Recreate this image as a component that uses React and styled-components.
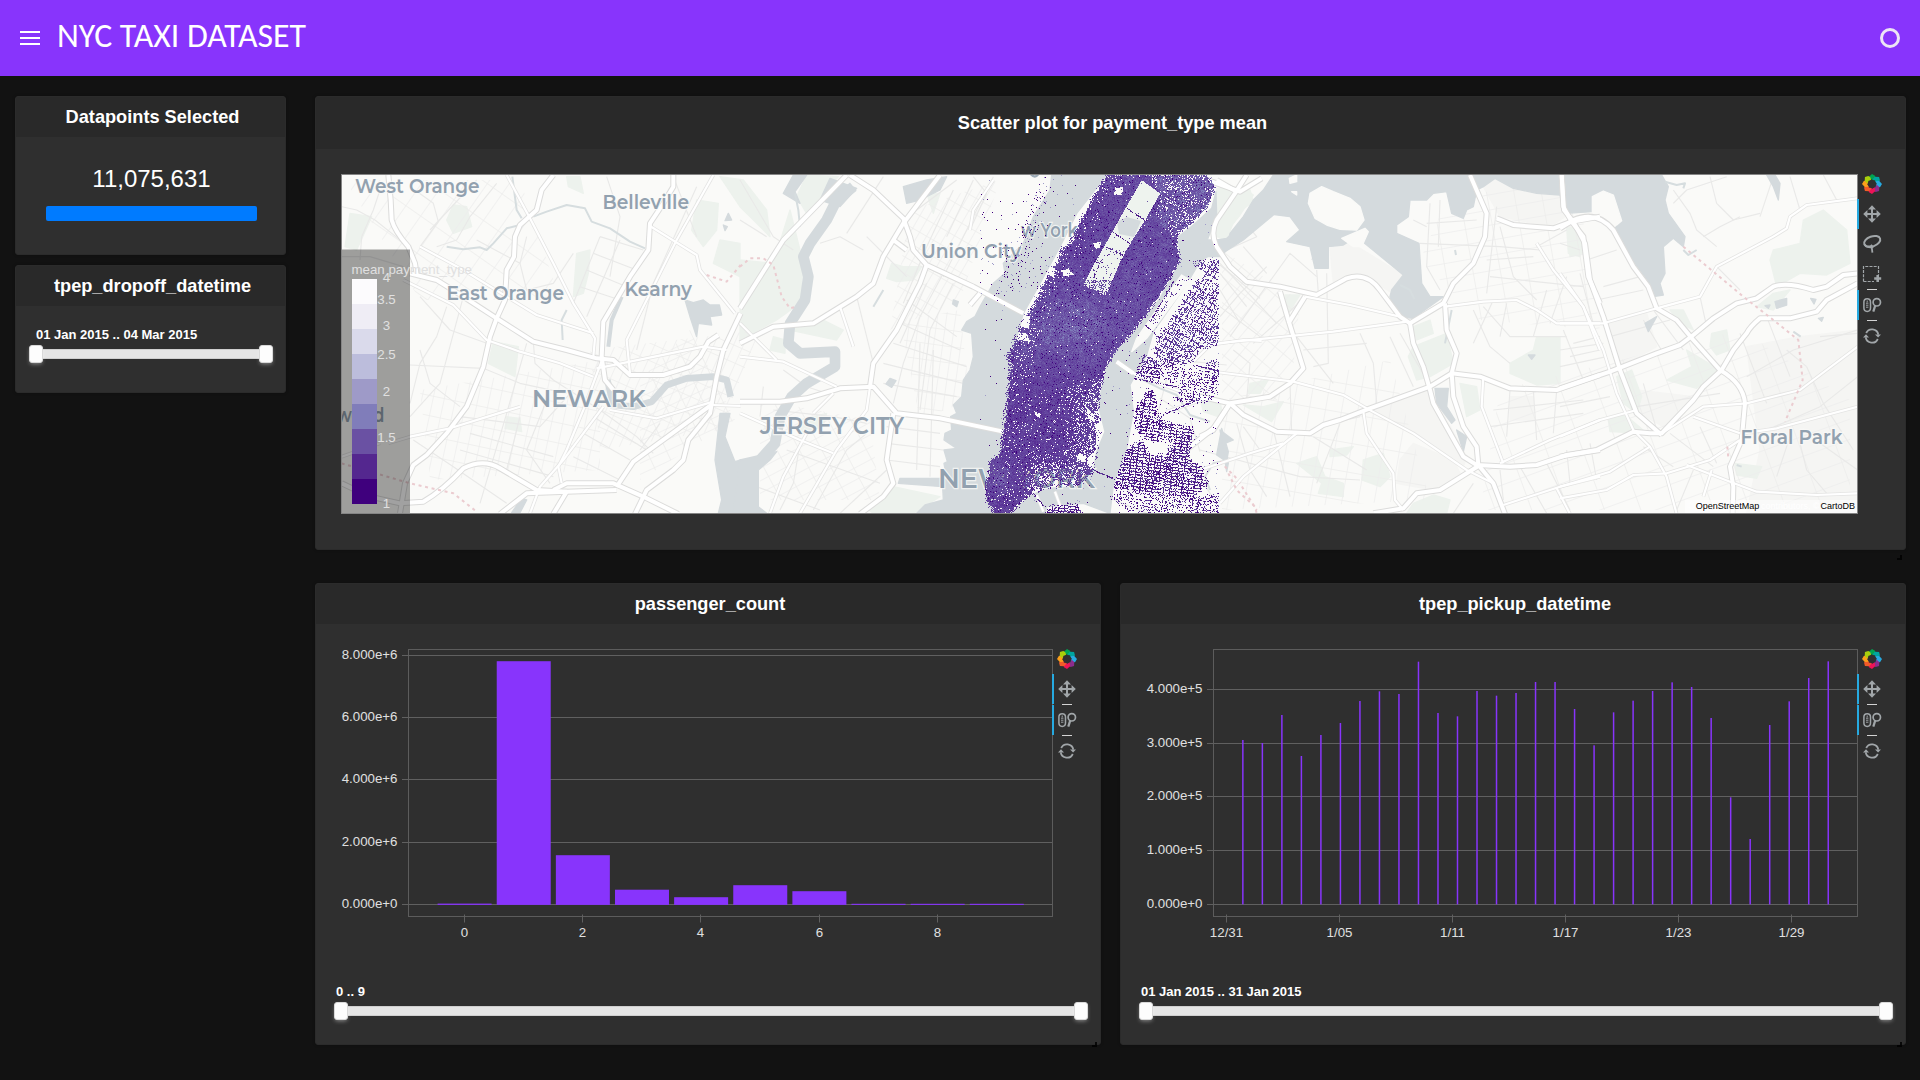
import React, { useMemo } from "react";
import styled, { createGlobalStyle } from "styled-components";

const Global = createGlobalStyle`
  html, body { margin: 0; background: #121212; }
  body { font-family: "Liberation Sans", Arial, sans-serif; color: #fff; overflow: hidden; }
  * { box-sizing: border-box; }
`;

const Page = styled.div`
  width: 1920px;
  height: 1080px;
  display: flex;
  flex-direction: column;
`;
const Header = styled.header`
  height: 76px;
  flex: none;
  background: #8834fc;
  display: flex;
  align-items: center;
  padding: 0 20px;
`;
const Menu = styled.div`
  width: 20px;
  display: grid;
  gap: 4px;
`;
const MenuLine = styled.span`
  height: 2px;
  background: #fff;
`;
const AppTitle = styled.h1`
  margin: 0 auto 4px 17px;
  font: 400 33.8px/40px Carlito, Lato, sans-serif;
  white-space: nowrap;
`;
const Busy = styled.div`
  width: 20px;
  height: 20px;
  border: 3px solid #ece4f5;
  border-radius: 50%;
`;
const Body = styled.div`
  display: flex;
  gap: 29px;
  padding: 20px 14px 0 15px;
`;
const Sidebar = styled.aside`
  width: 271px;
  display: flex;
  flex-direction: column;
  gap: 10px;
`;
const Main = styled.main`
  flex: 1;
  display: grid;
  grid-template-columns: 786px 786px;
  gap: 33px 19px;
`;
const Card = styled.section`
  position: relative;
  height: ${(p) => p.$h}px;
  grid-column: ${(p) => (p.$wide ? "1 / -1" : "auto")};
  background: #2f2f2f;
  border: 1px solid #2b2b2b;
  border-radius: 3px;
  box-shadow: 0 0 3px rgba(0, 0, 0, 0.3);
`;
const CardTitle = styled.h2`
  height: ${(p) => p.$h || 40}px;
  margin: 0;
  display: flex;
  align-items: center;
  justify-content: center;
  padding-left: 4px;
  background: #292929;
  font-size: 18.2px;
  font-weight: 700;
`;
const Count = styled.div`
  margin-top: 27px;
  padding-left: 2px;
  text-align: center;
  font-size: 24px;
  line-height: 30px;
`;
const Progress = styled.div`
  height: 15px;
  margin: 12px 28px 0 30px;
  border-radius: 2px;
  background: #007bff;
`;
const Plot = styled.div`
  display: flex;
  align-items: flex-start;
  padding: 20px 0 0 ${(p) => p.$left}px;
`;
const MapSlot = styled.div`
  padding-top: 5px;
`;
const Tools = styled.div`
  width: 30px;
  margin-left: -1px;
  position: relative;
  display: flex;
  flex-direction: column;
  align-items: center;
`;
const Tool = styled.div`
  width: 30px;
  height: 30px;
  box-shadow: ${(p) => (p.$active ? "inset 2px 0 #26aae1" : "none")};
  color: #a1a6a9;
  svg { display: block; }
`;
const ToolRule = styled.div`
  width: 10px;
  height: 1px;
  background: #d3d3d3;
`;
const SliderBox = styled.div`
  padding: ${(p) => p.$pad};
`;
const SliderLabel = styled.div`
  padding-left: ${(p) => p.$inset}px;
  font-size: 13px;
  line-height: 16px;
  font-weight: 700;
`;
const Track = styled.div`
  height: 10px;
  margin: 6px 7px 0;
  display: flex;
  justify-content: space-between;
  align-items: center;
  background: #e5e5e5;
  border: solid #cfcfcf;
  border-width: 1px 0;
`;
const Handle = styled.span`
  width: 14px;
  height: 18px;
  margin: 0 -7px;
  border: 1px solid #d9d9d9;
  border-radius: 3px;
  background: #fdfdfd;
  box-shadow: 0 2px 4px -1px rgba(255, 255, 255, 0.45), inset 0 0 1px #fff;
`;
const Grip = styled.i`
  position: absolute;
  right: 3px;
  bottom: ${(p) => p.$b}px;
  width: 5px;
  height: 5px;
  border: solid #000;
  border-width: 0 2px 2px 0;
  opacity: 0.8;
`;
const Canvas = styled.svg`
  display: block;
  flex: none;
  font-family: "Liberation Sans", Arial, sans-serif;
`;

/* ---------- toolbar ---------- */
const PETALS = ["#00a451", "#00a5a0", "#27aae1", "#8b2d8c", "#ee1358", "#f15a29", "#fb9f1b", "#a9cf0b"];
const Logo = () => (
  <svg width="30" height="30" viewBox="-15 -15 30 30">
    {PETALS.map((c, i) => (
      <path key={c} fill={c} transform={`rotate(${i * 45})`} d="M-3.1-7.2 0-10 3-8.2 3.6-6 2.4-3.6-.6-4.8-2.8-3.4Z" />
    ))}
  </svg>
);
const Pan = () => (
  <svg width="30" height="30" fill="currentColor">
    <path d="M14 10h2v4h4v2h-4v4h-2v-4h-4v-2h4z" />
    <path d="M15 6.2 19 10.4H11ZM15 23.8 19 19.6H11ZM6.2 15 10.4 11V19ZM23.8 15 19.6 11V19Z" />
  </svg>
);
const Lasso = () => (
  <svg width="30" height="30" fill="none" stroke="currentColor" strokeWidth="2">
    <ellipse cx="15.2" cy="12.4" rx="8.4" ry="5" transform="rotate(-20 15.2 12.4)" />
    <path d="M7.2 15.2 10 17.6 14.6 17.2M12 18.2 14.8 18.6 15.4 23.6M14 15.8 16.2 18.6" strokeWidth="1.8" />
  </svg>
);
const BoxSelect = () => (
  <svg width="30" height="30" fill="none" stroke="currentColor">
    <path d="M6.5 22.5V7.5H21.5V16M6.5 22.5H17" strokeDasharray="3 1.2" strokeWidth="1.2" />
    <path d="M20.7 16v7M17.2 19.5h7" strokeWidth="2.6" />
  </svg>
);
const Wheel = () => (
  <svg width="30" height="30" fill="none" stroke="currentColor" strokeWidth="1.5">
    <rect x="6.9" y="8.8" width="6.6" height="12.6" rx="3.3" />
    <path d="M10.2 10.5V12.4M9 13.2h2.4M9 15.2h2.4M9 17.2h2.4" strokeWidth="1" />
    <circle cx="19.8" cy="12.3" r="3.7" strokeWidth="1.7" />
    <path d="M18.2 15.6 16.3 21.6" strokeWidth="2.2" />
  </svg>
);
const Reset = () => (
  <svg width="30" height="30" fill="none" stroke="currentColor" strokeWidth="1.8">
    <path d="M9.2 12A6.4 6.4 0 0 1 21.3 13.6M20.8 18A6.4 6.4 0 0 1 8.7 16.4" />
    <path d="M18 13.4h6L21.1 16.6ZM6 16.4h6L9 13.2Z" fill="currentColor" stroke="none" />
  </svg>
);
const Toolbar = ({ select }) => (
  <Tools>
    <Tool><Logo /></Tool>
    <Tool $active><Pan /></Tool>
    {select && <Tool><Lasso /></Tool>}
    {select && <Tool><BoxSelect /></Tool>}
    <ToolRule />
    <Tool $active><Wheel /></Tool>
    <ToolRule />
    <Tool><Reset /></Tool>
  </Tools>
);

const RangeSlider = ({ label, pad, inset }) => (
  <SliderBox $pad={pad}>
    <SliderLabel $inset={inset}>{label}</SliderLabel>
    <Track><Handle /><Handle /></Track>
  </SliderBox>
);

/* ---------- base map, in tiles of three units per pixel ---------- */
const TILES = [
  {
    x: 320, y: 150,
    water: ["1200,790 1230,790 1215,860 1245,935 1262,930 1262,1090 1195,1090 1205,1050 1185,930", "1095,450 1120,458 1150,450 1170,465 1198,465 1205,495 1170,500 1175,525 1135,520 1130,560 1110,500", "1225,190 1235,210 1215,212", "1210,225 1222,230 1215,242", "575,1088 605,1045 620,1050 600,1088"],
    streams: ["M380 290 430 298 480 292 500 300 520 280 560 235 600 225", "M577 80 590 180 605 205", "M640 200 680 185 740 165 795 175 815 215 870 235 930 275 975 295", "M740 480 725 510 728 570"],
    rivers: [["M905 440 875 510 865 590", 12], ["M862 690 880 765 940 770 995 755 1040 705 1100 685 1180 680 1220 690 1232 740", 20]],
    parks: ["90,190 155,200 110,300 75,290", "400,165 440,170 455,230 400,250 380,210", "520,575 595,590 585,680 505,640", "770,310 810,300 805,370 790,430 760,440", "1130,150 1195,160 1190,240 1150,290 1115,240", "1200,270 1260,280 1260,380 1180,340", "560,800 600,805 605,845 555,835", "740,80 780,80 790,130 745,110"],
    minor: ["M65 320 150 320 250 350", "M120 330 125 260 160 180 180 120", "M65 170 110 180 165 210 265 290", "M285 120 340 160 355 215 300 290", "M330 240 470 90", "M350 290 410 270 450 200 530 100", "M470 270 600 340 620 260", "M300 440 390 540 500 580", "M270 645 490 655 600 700 740 730", "M270 760 300 640 350 560 380 470", "M430 440 360 700 270 800", "M600 340 620 420 700 400 760 310", "M620 580 560 790 480 1060", "M420 800 660 830 760 720", "M640 575 645 640 700 690 840 780 950 860 1000 910", "M840 260 760 460", "M900 270 800 500", "M840 260 970 300", "M820 310 950 360", "M800 360 920 410", "M780 410 900 450", "M950 600 1000 400 1130 110", "M300 600 330 700 420 770", "M280 870 400 950 560 1060", "M600 800 560 960", "M680 750 620 900 690 1000", "M450 850 700 920", "M420 900 700 980", "M820 800 980 900", "M790 850 930 930", "M760 920 900 990", "M1020 820 960 900", "M1060 80 1130 260", "M860 80 900 200 870 380"],
    medium: ["M560 75 630 205 700 340 760 460 825 565 820 620", "M1180 75 1070 270 1000 410 920 570 930 670", "M985 225 1130 315 1140 360 1245 490", "M300 290 430 360 560 440 650 495 820 550", "M1220 600 1150 590 930 635 830 655", "M250 390 330 430 400 465 500 570 600 605 720 640 820 680", "M205 880 270 860 390 835 600 770", "M870 780 1010 805 1180 755", "M850 620 790 780 740 900 715 950 725 1000", "M1180 765 1262 768", "M850 770 730 930 660 1010 630 1090", "M65 920 180 880"],
    major: ["M205 75 212 150 215 210 Q225 245 265 290L285 340 290 375", "M270 370 350 390 430 440 530 505 640 575 740 600 830 625 880 630 930 675 1030 675 1110 650 1140 620 1165 575 1195 555", "M700 75 665 120 650 180 600 225 585 260 582 320 560 360 555 450 530 505 510 560 490 650 440 770 380 850 320 915 280 945 255 1000 240 1090", "M1060 75 1060 110 1030 160 990 220 985 300 930 380 850 515 845 620 855 690 880 720", "M65 1000 150 1040 240 1060 310 1055Q370 1020 430 955 490 925 540 955L650 1020 740 1025 890 1020", "M700 1020 740 1000 880 1000 970 1040 1075 1092", "M890 1010 940 935 1180 760", "M945 1092 980 1020 1060 960 1090 930 1105 870 1170 790 1190 680 1210 600 1262 490", "M540 1092 620 1030 740 1025 700 1092"],
    dash: ["M65 940 270 1000 400 1030 470 1085", "M1160 375 1220 395 1262 345"],
  },
  {
    x: 740, y: 150,
    water: ["935,75 1100,75 1010,190 960,290 900,400 850,490 820,600 810,700 800,850 785,930 760,1090 530,1090 555,1065 610,1050 608,1010 475,1000 480,985 620,985 612,940 622,935 612,900 650,895 612,870 615,850 635,840 632,800 650,790 640,765 665,740 670,690 690,660 700,620 695,550 665,540 680,515 705,500 720,470 760,400 795,370 790,340 850,280 880,200 930,120", "0,930 110,905 90,930 55,960 55,1070 80,1090 -20,1090", "270,85 350,115 300,170 240,150", "490,110 560,90 620,80 600,120 540,150 500,160", "450,685 468,692 455,712 438,702", "160,75 200,75 165,125 180,160 130,130", "640,450 655,455 650,470 638,462"],
    streams: ["M165 130 175 180 180 230", "M430 420 400 470"],
    rivers: [["M340 110 290 150 260 210 210 280 190 320 205 380 195 450 150 520 145 580 180 610 285 605 285 650 200 700 155 740 120 800 105 880 60 930", 32]],
    parks: ["0,330 100,340 150,180 190,340 180,460 110,510 0,570", "200,75 295,80 200,190 170,140", "455,340 490,350 545,350 520,390 470,395 440,385", "380,1075 460,1010 600,1040 520,1090 400,1090", "-60,80 10,90 80,180 90,260 0,170", "150,540 250,510 310,540 290,570", "560,130 600,130 580,190", "100,560 135,570 135,610 90,600", "180,810 260,790 250,830 180,850"],
    minor: ["M0 90 100 260 160 300", "M240 240 210 300", "M430 80 320 250", "M650 90 490 210", "M370 300 300 260 240 280", "M380 260 500 380", "M640 120 560 290 490 460", "M700 90 620 260", "M760 80 680 240 610 380", "M350 440 380 560 400 640", "M560 400 480 580", "M610 370 540 500 490 640 460 760", "M640 400 570 540 540 780", "M500 450 650 560", "M480 520 660 600", "M460 580 680 650", "M430 640 670 700", "M430 700 650 740", "M440 830 600 850", "M440 880 610 900", "M440 930 600 950", "M540 580 530 960", "M580 600 570 980", "M130 660 200 710 260 730", "M100 780 280 800 380 820", "M140 900 420 1000", "M180 880 160 1000 120 1080", "M220 1080 320 900 380 850", "M50 1010 240 1080", "M300 1090 440 960", "M700 80 740 130 690 240", "M70 710 60 800", "M0 210 80 260"],
    medium: ["M0 620 130 635 290 710", "M0 520 110 630", "M0 790 180 870 280 910", "M300 470 340 590", "M280 730 220 790", "M390 710 380 780 290 900 180 1090", "M200 850 130 980 90 1090", "M690 240 700 180 760 90"],
    major: ["M0 475 130 270 320 75", "M330 75 400 120 490 205 510 260 520 300 560 345 700 410 850 490", "M600 75 490 220 430 320 400 400 350 440 220 520 100 530 0 580", "M0 755 120 755 200 745 300 715 400 710 470 790 600 805 790 845", "M560 345 540 400 470 540 400 640 390 710", "M460 790 440 930 460 1000 430 1040 360 1092", "M460 270 500 300", "M690 465 720 430"],
    dash: ["M0 350 30 325 70 325 100 345 125 440 150 475 170 470"],
  },
  {
    x: 960, y: 165,
    water: ["768,80 755,130 700,180 655,215 660,290 600,400 530,490 480,545 440,600 430,650 415,720 435,800 410,860 400,920 355,965 260,970 215,990 150,1045 255,1045 260,1025 370,1015 450,1045 460,960 500,850 520,740 510,660 560,570 580,500 650,400 690,340 720,290 750,270 780,270 850,225 940,150 940,50 850,180 800,220 740,230 770,150", "785,790 805,860 800,890 770,870"],
    streams: ["M540 640 600 670 650 690 690 750 750 770"],
    rivers: [],
    parks: ["770,70 850,70 880,90 840,150 800,200 770,190", "720,700 780,710 790,760 730,740"],
    land: ["665,330 690,345 560,520 515,560 530,520 600,420"],
    minor: ["M780 300 900 400", "M700 590 800 600", "M600 700 690 760 720 860", "M500 980 760 900", "M620 640 590 760", "M650 830 760 1000", "M450 1000 560 1045"],
    medium: ["M700 590 750 540 850 525 905 528", "M480 600 530 630 690 690 810 715", "M230 990 250 1040", "M285 980 305 1035", "M620 740 740 700"],
    major: ["M470 590 520 625", "M700 30 840 80 905 40", "M810 715 760 790 710 830 620 900"],
    dash: ["M780 890 830 940 890 1035"],
  },
  {
    x: 1200, y: 150,
    water: ["220,75 190,120 160,150 130,200 90,250 85,270 0,270 0,320 60,320 100,280 195,190 270,200 300,240 260,275 330,290 345,355 385,355 385,290 430,285 470,260 610,375 575,420 570,440 590,500 640,505 730,440 690,440 665,400 657,280 590,250 590,225 625,200 630,150 680,150 700,130 740,125 755,190 790,205 800,180 820,170 830,120 850,110 885,85 940,115 1010,130 1080,135 1100,190 1180,170 1200,130 1200,75", "705,715 745,715 740,770 765,810 755,820 710,760", "770,840 800,860 790,905", "60,840 100,870 75,880 85,940 80,965 70,900", "985,615 1005,615 995,628"],
    land: ["330,130 365,110 400,125 450,145 480,170 492,210 470,240 420,238 380,225 345,205 325,160", "268,85 290,75 290,95 270,100", "275,125 290,125 290,135", "425,265 495,235 505,245 485,290 460,290"],
    streams: ["M600 405 630 420 643 447", "M755 480 735 580", "M85 930 40 940 15 980 30 1020", "M765 300 768 315"],
    rivers: [],
    parks: ["640,590 740,550 760,640 690,680 650,690 625,620", "930,640 1000,600 1010,560 1080,560 1080,700 1010,705 930,670", "290,940 350,920 375,980 430,1000 430,1040 355,1030 365,1000", "490,930 550,910 570,980 540,1010 485,990", "640,1060 700,1035 750,1050 740,1090 620,1090", "780,700 830,710 840,780 800,800", "130,765 190,770 250,755 215,815", "150,700 205,690 180,730 145,730", "255,435 300,435 265,490", "50,130 150,120 160,155 110,190 80,270 50,260", "1105,240 1140,250 1150,310 1110,320", "390,900 460,890 440,915 390,920", "640,530 690,510 700,550 650,570"],
    gray: ["850,110 885,85 940,115 1080,135 1095,200 1050,230 900,200", "690,720 800,920 790,950 640,850 510,780", "600,930 640,880 760,930 780,970 700,1020 590,1000", "930,740 1000,740 1000,810 930,810", "390,295 440,270 610,375 570,425 480,370 400,400"],
    minor: ["M60 340 230 520", "M80 300 170 260 130 210", "M130 290 200 370", "M60 370 140 470", "M60 420 120 520", "M60 470 180 560", "M90 560 270 310 350 380", "M160 580 330 430", "M60 500 120 430 200 350", "M380 230 335 330", "M350 360 355 430", "M380 370 385 640 340 650", "M480 550 520 640 530 760", "M310 600 500 580", "M570 560 640 710", "M290 560 400 700", "M100 600 150 640 140 750", "M600 550 680 690", "M270 700 275 850", "M130 830 180 900", "M220 840 270 1040", "M0 900 300 980 480 990", "M340 860 500 960", "M420 820 350 1000", "M110 820 150 960 200 1040", "M660 280 900 290 1020 300", "M680 220 830 210", "M690 160 680 350 720 420", "M720 150 715 290", "M640 210 680 230", "M860 330 1000 320", "M870 380 1150 410", "M890 170 860 430", "M900 230 940 380 1010 450", "M1010 290 1100 240", "M850 470 930 560 1100 560", "M820 480 870 590 930 640", "M880 450 820 580", "M920 460 900 560", "M1040 420 1000 560", "M1100 380 1050 520", "M930 720 920 860", "M1000 720 1010 870", "M1070 720 1060 850", "M880 780 1150 750", "M870 830 1150 790", "M900 960 910 1050", "M960 950 1040 1090", "M1040 940 1110 1080", "M1120 580 1200 560", "M1110 620 1200 600", "M1090 540 1150 690", "M820 1000 760 1090", "M480 800 350 830"],
    medium: ["M315 440 450 465 600 500", "M0 585 200 565 400 545 620 515", "M0 660 280 695 430 735 500 775 640 850 800 960 880 1000", "M490 785 500 850 580 970 585 1050 610 1080", "M60 1060 130 980 290 850", "M0 960 150 910 250 880", "M735 470 850 455 950 450 1010 480 1070 520 1200 520", "M1010 280 1060 360 1150 470 1180 550 1200 600", "M850 680 845 770 910 940", "M900 940 1050 870 1200 810", "M910 1065 1080 1010 1200 980", "M1070 1015 1110 1092"],
    major: ["M140 75 105 130 50 210Q30 250 50 290L90 350 140 395 240 410 350 435 440 385Q500 365 540 420L600 500 630 520 730 460 760 400 820 340 855 260 860 190 810 75", "M890 205 940 225 1060 235 1115 215 1200 200", "M1085 75 1090 170 1115 215 1150 260 1165 380 1200 460", "M630 520 640 580 670 650 690 720 700 760 790 920 830 945 930 950 1010 945 1100 915 1200 900", "M735 460 740 540 770 610 755 670 760 740 790 830 830 890 835 945 880 1000 915 1092", "M0 740 90 760 210 740 270 700 310 655 290 590 265 510 240 425", "M90 760 130 795 230 845 330 850 370 825 420 810 510 775 690 710 755 670 840 680 930 715 1070 720 1200 675", "M90 760 40 840 0 860", "M315 440 265 520", "M840 945 720 1020 650 1030 610 1075 520 1090", "M50 90 110 125"],
    dash: ["M85 970 110 1020 165 1070 170 1090"],
  },
  {
    x: 1560, y: 150,
    water: ["15,75 20,190 95,185 105,160 100,140 130,125 155,135 185,210 165,235 210,320 270,400 280,440 310,435 300,400 315,370 310,290 340,265 370,290 375,260 325,190 315,150 325,110 305,75", "620,75 645,75 660,100 655,150 640,110", "645,455 680,445 680,465 650,475", "752,445 768,448 762,462", "775,505 790,502 785,514", "255,520 290,500 265,545", "615,467 630,465 625,475"],
    land: ["97,140 130,123 160,135 185,212 170,225 130,200 97,190"],
    streams: ["M315 95 350 105 375 100 370 115", "M370 300 385 315 410 300", "M700 545 722 560", "M530 945 545 950"],
    rivers: [],
    parks: ["640,300 720,280 730,210 790,180 860,240 870,340 800,375 720,370 650,410 630,330", "380,600 480,660 410,715 320,690 395,650", "170,680 215,660 245,740 230,790 190,760", "640,430 690,420 640,480 590,470", "525,940 605,950 590,985 530,975", "455,550 500,540 510,600 470,615 450,590", "145,810 190,790 260,850 150,845", "20,230 60,240 60,320 25,310", "330,480 370,480 400,540 360,520", "115,140 140,130 155,160 130,170"],
    gray: ["560,590 720,560 893,540 893,1088 560,1088 600,900", "230,720 400,740 310,830 240,790", "140,520 260,490 290,590 180,650"],
    minor: ["M340 120 390 190 410 240 470 290", "M450 80 470 160 520 210 600 190", "M340 160 380 120 500 80", "M430 260 480 230 540 200", "M640 80 600 200", "M690 80 720 180", "M790 75 830 150", "M470 350 540 420", "M130 410 240 380", "M80 330 170 300", "M0 280 60 300", "M110 450 250 420", "M60 370 110 560", "M0 600 130 580", "M0 650 140 620", "M280 480 370 600", "M250 510 310 610", "M150 560 330 510", "M420 440 440 530", "M540 550 620 760", "M620 500 690 680", "M560 680 700 600 893 540", "M600 850 780 770 893 680", "M740 650 790 760 880 900", "M780 560 893 550", "M680 600 740 650", "M230 770 480 730", "M250 890 340 950", "M330 850 460 950", "M420 830 470 940", "M690 860 650 980", "M720 880 740 960 800 1030", "M780 880 893 960", "M20 900 30 1000", "M90 880 110 990", "M350 1080 400 960", "M0 770 150 740", "M250 700 290 840"],
    medium: ["M290 475 420 440 470 350 640 260 680 235 690 200 740 165 893 145", "M0 520 130 520 290 475", "M0 370 70 470 130 600 170 730 220 840 270 890 320 980 350 1092", "M0 860 120 810 230 780", "M305 850 430 770 560 760", "M560 760 720 720 893 590", "M550 850 650 835 893 770", "M400 800 540 850", "M0 1010 150 965 270 890", "M0 1045 140 1020 220 975 320 970 450 930 540 870", "M380 945 510 995 590 1025 770 1035 893 1030", "M455 960 430 1040"],
    major: ["M5 75 12 180 40 215 75 280 90 390 130 500 180 660 230 790 305 855", "M0 235 40 210Q110 180 160 240L220 350 265 410 290 475 350 510 400 570 480 660Q550 700 555 760L545 870 510 950 520 1010 518 1092", "M0 715 150 665 290 610 360 585 400 555 460 505 530 460 590 445 640 410Q680 395 760 420L800 410 850 375 893 370", "M893 400 800 450 770 485 690 505 600 505Q570 530 560 550L520 600 485 660 430 710 400 750 305 850 270 850 220 845 110 900 0 920"],
    dash: ["M370 290 550 440 640 510 715 570 728 690 675 815", "M502 890 505 925"],
  },
];

const HATCHES = [
  ["800,560 960,575 940,650 840,620", 60, 9],
  ["590,350 760,330 720,430 600,450", 24, 9],
  ["640,380 690,330 735,420 640,480", 65, 10],
  ["420,390 600,360 600,470 430,480", 12, 11],
  ["910,210 1000,180 960,300 890,330", 30, 8],
  ["900,320 960,310 970,400 920,420", 8, 9],
  ["1222,250 1300,300 1290,400 1222,400", 40, 11],
  ["1420,260 1440,215 1520,175 1580,200 1600,330 1480,320", 80, 15],
  ["1222,400 1390,360 1430,500 1222,510", 10, 16],
  ["1500,390 1740,330 1850,400 1850,510 1480,510", 70, 19],
  ["760,400 870,420 880,500 760,500", 62, 11],
  ["345,180 520,180 560,300 420,300", 35, 18],
];
const MAP_LABELS = [
  ["West Orange", 355, 192.5, 124.5, 20],
  ["Belleville", 602.5, 209.3, 86.5, 20],
  ["East Orange", 446.5, 299.5, 117.5, 20],
  ["Kearny", 624.5, 296, 67.5, 20],
  ["NEWARK", 532, 407, 113.5, 24],
  ["JERSEY CITY", 760, 433.5, 144, 24],
  ["Union City", 921, 258, 100, 20],
  ["w York", 1021, 236.5, 57, 20],
  ["NEW YORK", 938, 487.5, 157, 28],
  ["Floral Park", 1740.5, 443.5, 102, 20],
];
const SWATCHES = ["#fcfbfd", "#efedf5", "#dadaeb", "#bcbddc", "#9e9ac8", "#807dba", "#6a51a3", "#54278f", "#3f007d"];
const SCALE = [["4", 277], ["3.5", 299], ["3", 324.5], ["2.5", 353.5], ["2", 390.5], ["1.5", 436.5], ["1", 502.5]];

/* ---------- shaded trip points ---------- */
const ISLAND = [[440,28],[405,85],[380,135],[355,175],[340,215],[325,240],[305,250],[290,295],[270,320],[245,370],[215,430],[185,465],[165,510],[155,545],[138,575],[150,600],[145,650],[140,700],[133,760],[128,800],[118,870],[88,885],[85,925],[75,960],[78,1005],[100,1047],[150,1047],[185,1010],[215,990],[260,970],[310,960],[355,965],[400,920],[410,860],[425,800],[420,750],[415,720],[425,650],[440,600],[480,545],[530,485],[580,420],[630,340],[660,285],[650,240],[650,210],[700,170],[750,110],[765,70],[740,28]];
const HARLEM = [[560,25],[600,80],[590,165],[635,215],[658,215],[700,175],[755,115],[770,70],[745,25]];
const PARK = [[545,45],[600,85],[555,165],[510,235],[480,290],[437,392],[370,360],[400,300],[440,230],[490,140]];
const EAST = [
  [[[700,290],[776,283],[776,535],[720,555],[700,590],[620,610],[585,570],[590,520],[660,420],[695,360],[730,330]], 0.5],
  [[[600,600],[700,610],[776,578],[776,700],[690,720],[640,700],[670,660],[600,640]], 0.3],
  [[[548,570],[570,570],[600,600],[640,600],[600,645],[525,632]], 0.6],
  [[[560,670],[585,680],[590,740],[640,775],[700,790],[700,820],[560,830],[530,800],[520,740]], 0.5],
  [[[500,850],[545,825],[570,870],[620,870],[640,810],[695,795],[690,880],[720,900],[745,960],[690,1000],[460,965]], 0.62],
  [[[460,965],[690,990],[660,1047],[520,1047],[455,1000]], 0.3],
  [[[690,1000],[776,985],[776,1047],[670,1047]], 0.42],
  [[[255,1047],[270,1020],[350,1015],[372,1047]], 0.7],
  [[[560,480],[650,345],[680,340],[590,470]], 0.2],
];
const HOLES = [
  [[190,450],[212,455],[205,490],[182,485]], [[168,500],[200,505],[210,530],[165,522]],
  [[355,865],[378,870],[372,892],[350,885]], [[378,725],[398,745],[405,770],[385,760]],
  [[380,880],[410,850],[402,910],[380,900]], [[405,775],[432,770],[420,840],[408,850]],
  [[225,740],[242,746],[238,758],[226,750]], [[400,235],[425,228],[420,248],[404,248]],
  [[305,315],[325,312],[345,330],[310,332]], [[268,310],[285,308],[280,335],[265,332]],
  [[465,70],[490,65],[485,90],[462,88]], [[570,835],[620,840],[610,870],[575,865]],
];
const LINKS = [[500,130,555,165],[460,203,510,235],[437,245,492,272],[400,915,462,942],[218,985,250,1022],[555,480,600,520],[400,340,420,290],[600,600,720,545],[700,600,776,618],[520,640,650,665],[640,350,570,470],[620,745,720,700]];
const RAMP = ["#3f007d", "#4b147f", "#54278f", "#593095", "#5f3c99", "#6446a0", "#6a51a3", "#7462ac", "#807dba", "#9e9ac8"];

const inside = (poly, x, y) => {
  let hit = false;
  for (let i = 0, j = poly.length - 1; i < poly.length; j = i++) {
    const [xi, yi] = poly[i];
    const [xj, yj] = poly[j];
    if (yi > y !== yj > y && x < ((xj - xi) * (y - yi)) / (yj - yi) + xi) hit = !hit;
  }
  return hit;
};
const nearLink = (x, y) =>
  LINKS.some(([a, b, c, d]) => {
    const dx = c - a, dy = d - b;
    const t = Math.max(0, Math.min(1, ((x - a) * dx + (y - b) * dy) / (dx * dx + dy * dy)));
    return Math.hypot(x - a - t * dx, y - b - t * dy) < 2.2;
  });
const ramp = (v, from, to) => Math.max(0, Math.min(1, (v - from) / (to - from)));
const bump = (x, y, cx, cy, rx, ry) => Math.exp(-(((x - cx) / rx) ** 2) - ((y - cy) / ry) ** 2);

function shadePoints() {
  let s = 20150101;
  const rnd = () => {
    s = (s + 0x6d2b79f5) | 0;
    let t = Math.imul(s ^ (s >>> 15), 1 | s);
    t = (t + Math.imul(t ^ (t >>> 7), 61 | t)) ^ t;
    return ((t ^ (t >>> 14)) >>> 0) / 4294967296;
  };
  /* slowly varying field, for blocks that are emptier or fuller than their surroundings */
  const grid = Array.from({ length: 70 * 90 }, rnd);
  const field = (x, y) => {
    const gx = x / 14, gy = y / 14;
    const ix = Math.floor(gx), iy = Math.floor(gy), fx = gx - ix, fy = gy - iy;
    const at = (a, b) => grid[b * 70 + a];
    return (at(ix, iy) * (1 - fx) + at(ix + 1, iy) * fx) * (1 - fy) + (at(ix, iy + 1) * (1 - fx) + at(ix + 1, iy + 1) * fx) * fy;
  };
  const paths = RAMP.map(() => "");
  for (let py = 175; py < 513; py++) {
    let run = -1, start = 0;
    for (let px = 980; px <= 1219; px++) {
      const x = (px - 960) * 3 + 1, y = (py - 165) * 3 + 1;
      const jx = x + (rnd() - 0.5) * 12, jy = y + (rnd() - 0.5) * 12;
      let density = 0.006;
      let level = rnd() < 0.6 ? 0 : 9;
      const f = field(x, y);
      if (px < 1219) {
        if (x > 60 && x < 260 && y < 390) {
          const shore = Math.abs(x - (262 - ramp(y, 60, 390) * 130));
          density = shore < 26 ? 0.11 * f + 0.02 : x > 90 && y < 230 ? 0.006 : 0.02;
        }
        if (inside(ISLAND, jx, jy)) {
          const u = (x * 0.87 + y * 0.5) / 3, v = (-x * 0.5 + y * 0.87) / 3;
          const street = Math.floor(u) % 7 < 2 || Math.floor(v) % 5 < 1;
          const mid = bump(x, y, 330, 480, 140, 120);
          level = 4.7 + mid * 1.9 + bump(x, y, 125, 945, 32, 36) * 2 + (rnd() - 0.5) * 2.8 + (f - 0.5) * 1.6;
          level += 0.8 * (1 - ramp(y, 380, 620)) * ramp(x, 380, 500) - 0.4 * ramp(y, 600, 720);
          const lowerEast = ramp(y, 620, 720) * ramp(x + f * 60, 310, 430) * 0.42;
          const west = (1 - ramp(x + (y - 400) * 0.3, 230, 300)) * ramp(y, 400, 450) * (1 - ramp(y, 820, 880)) * 0.16;
          const upper = (1 - ramp(x + (y - 60) * 0.6, 430, 500)) * (1 - ramp(y, 380, 440)) * 0.14;
          const south = ramp(y, 870, 930) * ramp(x, 180, 230) * 0.62;
          const thin = Math.max(lowerEast, west, upper, south, 0.01 + 0.07 * ramp(y, 660, 760));
          density = 1 - thin * (street ? 0.45 : 1) * (0.35 + 1.35 * (1 - f));
          if (inside(HARLEM, jx, jy)) {
            density = (street ? 0.85 : 0.36) * (0.75 + f * 0.5);
            level += 0.7;
          }
          if (inside(PARK, x, y)) density = y > 345 ? 0.42 : y > 250 ? 0.06 : 0.004;
          else if (HOLES.some((h) => inside(h, x, y))) density = 0.08;
          if (rnd() < 0.04) level = 0;
        } else {
          const zone = EAST.find(([p]) => inside(p, jx, jy));
          if (zone) {
            const turn = y > 600 ? [0.99, 0.12] : [0.87, 0.5];
            const uu = (x * turn[0] + y * turn[1]) / 3, vv = (-x * turn[1] + y * turn[0]) / 3;
            const road = y > 600 ? Math.floor(vv) % 3 === 0 || Math.floor(uu) % 6 === 0 : Math.floor(uu) % 4 === 0 || Math.floor(vv) % 6 === 0;
            const p = zone[1] * (0.6 + f * 0.8);
            density = road ? Math.min(0.94, p * 1.5) : p * 0.38;
            level = (y > 600 ? 2 : 4) + (rnd() - 0.5) * 7;
          } else if (x > 500 && y > 300) density = 0.035 * f;
        }
        if (nearLink(x, y)) { density = 0.65; level = rnd() * 5; }
      } else density = 0;
      const c = rnd() < density ? Math.max(0, Math.min(9, Math.round(level))) : -1;
      if (c !== run) {
        if (run >= 0) paths[run] += `M${start} ${py}h${px - start}v1h${start - px}z`;
        run = c;
        start = px;
      }
    }
  }
  return paths;
}

const TileLayer = ({ kind, children }) =>
  TILES.map((t) => (
    <g key={kind + t.x} transform={`translate(${t.x} ${t.y}) scale(.33333)`}>{children(t)}</g>
  ));
const polys = (list, fill) => (list || []).map((p) => <polygon key={p} points={p} fill={fill} stroke={fill} strokeWidth="4" strokeLinejoin="round" />);
const lines = (list, stroke, w, extra) =>
  (list || []).map((d) => <path key={d} d={d} fill="none" stroke={stroke} strokeWidth={w} strokeLinejoin="round" {...extra} />);

const TaxiMap = () => {
  const points = useMemo(shadePoints, []);
  return (
    <Canvas width="1517" height="340" viewBox="341 174 1517 340">
      <defs>
        <clipPath id="frame"><rect x="342" y="175" width="1515" height="338" /></clipPath>
        {HATCHES.map(([p, a, step], i) => (
          <pattern key={p} id={`hatch${i}`} width={step} height={step * 1.8} patternUnits="userSpaceOnUse" patternTransform={`rotate(${a})`}>
            <path d={`M0 0H${step}M0 0V${step * 1.8}`} stroke="#ededec" strokeWidth="1.4" fill="none" />
          </pattern>
        ))}
      </defs>
      <g clipPath="url(#frame)">
        <rect x="341" y="174" width="1517" height="340" fill="#fafaf8" />
        <TileLayer kind="a">{(t) => <>{polys(t.gray, "#f5f5f3")}{polys(t.parks, "#edf2ed")}</>}</TileLayer>
        {HATCHES.map(([p], i) => <polygon key={p} points={p} fill={`url(#hatch${i})`} />)}
        <TileLayer kind="b">{(t) => lines(t.minor, "#e9e9e8", 3.4)}</TileLayer>
        <TileLayer kind="c">
          {(t) => (
            <>
              {polys(t.water, "#d4dadd")}
              {polys(t.land, "#fafaf8")}
              {lines(t.streams, "#d6dddf", 6)}
              {t.rivers.map(([d, w]) => <path key={d} d={d} fill="none" stroke="#d4dadd" strokeWidth={w} strokeLinejoin="round" />)}
            </>
          )}
        </TileLayer>
        <polygon points="1141.7,180 1160,193.3 1145,220 1130,243.3 1120,261.7 1105.7,295.7 1083.3,285 1093.3,265 1106.7,241.7 1123.3,211.7" fill="#eef3ee" />
        <polygon points="1117,222 1127,217 1141,221 1134,237 1119,234" fill="#d4dadd" />
        <TileLayer kind="d">{(t) => <>{lines(t.medium, "#e4e4e3", 11)}{lines(t.major, "#dcdcdb", 18)}</>}</TileLayer>
        <TileLayer kind="e">{(t) => <>{lines(t.medium, "#ffffff", 6.5)}{lines(t.major, "#ffffff", 12)}{lines(t.dash, "#ebccd0", 6, { strokeDasharray: "9 11" })}</>}</TileLayer>
        <path d="M1031 174.5q4 4 7 0" fill="none" stroke="#9dabb7" strokeWidth="2.4" />
        <g fontFamily="Montserrat, Lato, sans-serif" fontWeight="600" fill="#92a1af" stroke="#fafaf8" strokeOpacity=".75" strokeWidth="2.4" paintOrder="stroke">
          {MAP_LABELS.map(([t, x, y, w, size]) => (
            <text key={t} x={x} y={y} fontSize={size} textLength={w} lengthAdjust="spacingAndGlyphs">{t}</text>
          ))}
          <text x="384.5" y="421.5" fontSize="20" textAnchor="end" textLength="48" lengthAdjust="spacingAndGlyphs">wood</text>
        </g>
        {points.map((d, i) => <path key={RAMP[i]} d={d} fill={RAMP[i]} shapeRendering="crispEdges" />)}
        <rect x="341" y="249.5" width="69" height="264" fill="#000" fillOpacity=".37" />
        {SWATCHES.map((c, i) => <rect key={c} x="352" y={279 + i * 25} width="25" height="25" fill={c} shapeRendering="crispEdges" />)}
        <g fontSize="13.3" fill="#e0e0e0">
          <text x="351.5" y="274">mean payment_type</text>
          {SCALE.map(([t, y]) => <text key={t} x="386.5" y={y + 5} textAnchor="middle">{t}</text>)}
        </g>
        <rect x="1685" y="500" width="172" height="13" fill="#fff" fillOpacity=".5" />
        <g fontSize="9">
          <text x="1687" y="509" fill="#fff">©</text>
          <text x="1695.7" y="509" fill="#000" textLength="63.5">OpenStreetMap</text>
          <text x="1761" y="509" fill="#fff">contributors, ©</text>
          <text x="1820.5" y="509" fill="#000" textLength="34.5">CartoDB</text>
        </g>
      </g>
      <rect x="341.5" y="174.5" width="1516" height="339" fill="none" stroke="#858585" />
    </Canvas>
  );
};

/* ---------- histograms ---------- */
const Axes = ({ x0, x1, ys, xs }) => (
  <>
    <g stroke="#606060" fill="none">
      {ys.map(([y]) => <path key={y} d={`M${x0} ${y}H${x1}`} />)}
      <rect x={x0} y="649.5" width={x1 - x0} height="267" stroke="#5c5c5c" />
      {ys.map(([y]) => <path key={y} d={`M${x0 - 6.5} ${y}h8.5`} />)}
      {xs.map(([x]) => <path key={x} d={`M${x} 914.5v8`} />)}
    </g>
    <g fontSize="13.3" fill="#e0e0e0">
      {ys.map(([y, t]) => <text key={t} x={x0 - 11} y={y + 3.5} textAnchor="end">{t}</text>)}
      {xs.map(([x, t]) => <text key={t} x={x} y="937" textAnchor="middle">{t}</text>)}
    </g>
  </>
);
const PASSENGERS = [903.6, 661.2, 855.2, 889.7, 897.2, 885.2, 891.2, 903.8, 903.8, 903.8];
const PassengerChart = () => (
  <Canvas width="718" height="300" viewBox="335 644 718 300">
    <Axes x0={408.5} x1={1052.5}
      ys={[[655.5, "8.000e+6"], [717.5, "6.000e+6"], [779.5, "4.000e+6"], [842.5, "2.000e+6"], [904.5, "0.000e+0"]]}
      xs={[[464.5, "0"], [582.5, "2"], [700.5, "4"], [819.5, "6"], [937.5, "8"]]} />
    {PASSENGERS.map((top, i) => (
      <rect key={i} x={464.5 + i * 59.13 - 26.9} y={top} width="54" height={904.9 - top} fill="#8834fc" />
    ))}
  </Canvas>
);
const PICKUPS = [510, 519, 435, 558, 495, 459, 393, 364, 372, 275, 429, 439, 363, 377, 369, 336, 336, 417, 526, 427, 392, 363, 337, 351, 444, 682, 807, 465, 394, 324, 274];
const PickupChart = () => (
  <Canvas width="718" height="300" viewBox="1140 644 718 300">
    <Axes x0={1213.5} x1={1857.5}
      ys={[[689.5, "4.000e+5"], [743.5, "3.000e+5"], [796.5, "2.000e+5"], [850.5, "1.000e+5"], [904.5, "0.000e+0"]]}
      xs={[[1226.5, "12/31"], [1339.5, "1/05"], [1452.5, "1/11"], [1565.5, "1/17"], [1678.5, "1/23"], [1791.5, "1/29"]]} />
    {PICKUPS.map((top, i) => (
      <rect key={i} x={1242.1 + i * 19.513} y={570 + top / 3} width="1.5" height={334.4 - top / 3} fill="#8834fc" />
    ))}
  </Canvas>
);

export default function App() {
  return (
    <Page>
      <Global />
      <Header>
        <Menu><MenuLine /><MenuLine /><MenuLine /></Menu>
        <AppTitle>NYC TAXI DATASET</AppTitle>
        <Busy />
      </Header>
      <Body>
        <Sidebar>
          <Card $h={159}>
            <CardTitle>Datapoints Selected</CardTitle>
            <Count>11,075,631</Count>
            <Progress />
          </Card>
          <Card $h={128}>
            <CardTitle>tpep_dropoff_datetime</CardTitle>
            <RangeSlider label="01 Jan 2015 .. 04 Mar 2015" pad="21px 12px 0 13px" inset={7} />
          </Card>
        </Sidebar>
        <Main>
          <Card $h={454} $wide>
            <CardTitle $h={52}>Scatter plot for payment_type mean</CardTitle>
            <Plot $left={25}>
              <MapSlot><TaxiMap /></MapSlot>
              <Toolbar select />
            </Plot>
            <Grip $b={-11} />
          </Card>
          <Card $h={462}>
            <CardTitle>passenger_count</CardTitle>
            <Plot $left={19}>
              <PassengerChart />
              <Toolbar />
            </Plot>
            <RangeSlider label="0 .. 9" pad="40px 12px 0 18px" inset={2} />
            <Grip $b={-3} />
          </Card>
          <Card $h={462}>
            <CardTitle>tpep_pickup_datetime</CardTitle>
            <Plot $left={19}>
              <PickupChart />
              <Toolbar />
            </Plot>
            <RangeSlider label="01 Jan 2015 .. 31 Jan 2015" pad="40px 12px 0 18px" inset={2} />
            <Grip $b={-3} />
          </Card>
        </Main>
      </Body>
    </Page>
  );
}
